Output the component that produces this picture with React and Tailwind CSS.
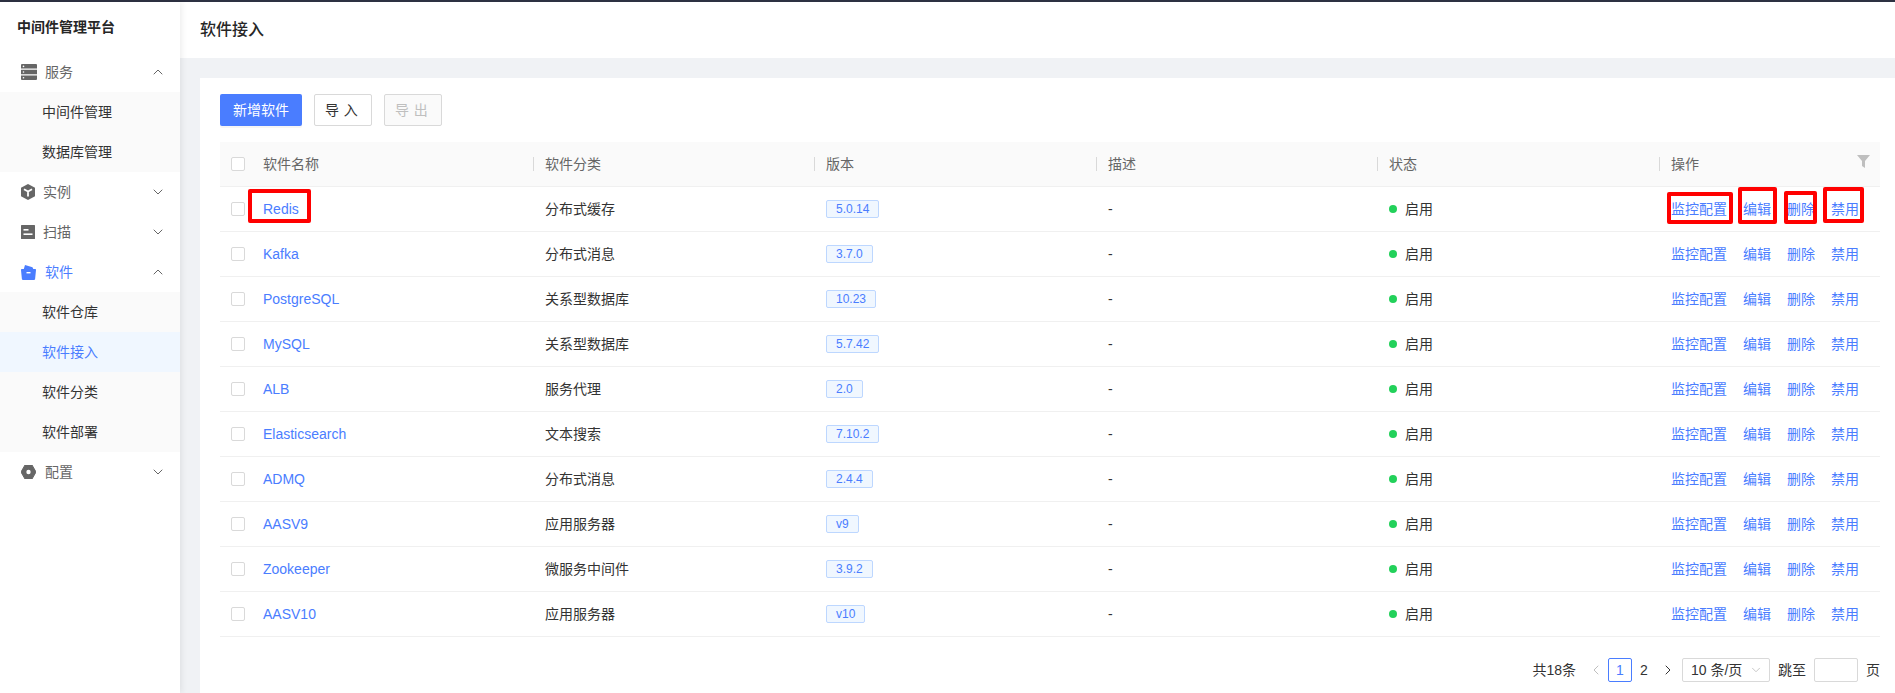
import React from "react";
import { ChevronUp, ChevronDown, ChevronLeft, ChevronRight } from "lucide-react";

const font = "font-['Liberation_Sans','Noto_Sans_CJK_SC',sans-serif]";

const rows = [
  ["Redis", "分布式缓存", "5.0.14"],
  ["Kafka", "分布式消息", "3.7.0"],
  ["PostgreSQL", "关系型数据库", "10.23"],
  ["MySQL", "关系型数据库", "5.7.42"],
  ["ALB", "服务代理", "2.0"],
  ["Elasticsearch", "文本搜索", "7.10.2"],
  ["ADMQ", "分布式消息", "2.4.4"],
  ["AASV9", "应用服务器", "v9"],
  ["Zookeeper", "微服务中间件", "3.9.2"],
  ["AASV10", "应用服务器", "v10"],
];

const columns = ["软件分类", "版本", "描述", "状态", "操作"];

const ServerIcon = () => (
  <svg width="16" height="16" viewBox="0 0 16 16" fill="#666">
    <path d="M1 0h14a1 1 0 0 1 1 1v3.5H0V1a1 1 0 0 1 1-1zM0 5.8h16v4.4H0zM0 11.5h16V15a1 1 0 0 1-1 1H1a1 1 0 0 1-1-1z" />
    <circle cx="2.5" cy="2.4" r="0.8" fill="#fff" />
    <circle cx="2.5" cy="8" r="0.8" fill="#fff" />
    <circle cx="2.5" cy="13.7" r="0.8" fill="#fff" />
  </svg>
);

const CubeIcon = () => (
  <svg width="14" height="16" viewBox="0 0 14 16" fill="#666">
    <path d="M7 0l7 3.8v8.4L7 16l-7-3.8V3.8z" />
    <path d="M7 7.6L3 5.2M7 7.6l4-2.4M7 7.6v5" stroke="#fff" strokeWidth="1.8" fill="none" />
  </svg>
);

const ScanIcon = () => (
  <svg width="14" height="14" viewBox="0 0 14 14">
    <rect width="14" height="14" rx="0.5" fill="#666" />
    <rect x="2.5" y="4" width="5" height="1.6" fill="#fff" />
    <rect x="2.5" y="8.4" width="9" height="1.6" fill="#fff" />
  </svg>
);

const BagIcon = () => (
  <svg width="15" height="15" viewBox="0 0 15 15" fill="#4a7dff">
    <path d="M4 0l7.5 2.2.8 1.8H14.2a.8.8 0 0 1 .8.9l-.9 9a1.2 1.2 0 0 1-1.2 1.1H2.1a1.2 1.2 0 0 1-1.2-1.1L0 4.9A.8.8 0 0 1 .8 4h2z" />
    <rect x="5.5" y="7" width="4" height="1.4" fill="#fff" />
  </svg>
);

const HexIcon = () => (
  <svg width="15" height="14" viewBox="0 0 15 14">
    <path d="M4 0h7l4 7-4 7H4L0 7z" fill="#666" stroke="#666" strokeLinejoin="round" />
    <circle cx="7.5" cy="7" r="2.2" fill="#fff" />
  </svg>
);

const FunnelIcon = () => (
  <svg width="13" height="13" viewBox="0 0 13 13" fill="#bfbfbf">
    <path d="M0 0h13L8 6v7L5 11V6z" />
  </svg>
);

const NavGroup = ({ icon, label, open, active, labelClass = "ml-[8px]" }) => {
  const Chevron = open ? ChevronUp : ChevronDown;
  return (
    <div className="h-[40px] flex items-center pl-[21px] pr-[14px] bg-white">
      <span className="w-[16px] flex justify-start">{icon}</span>
      <span className={`${labelClass} text-[14px] ${active ? "text-[#4a7dff]" : "text-[#666]"}`}>{label}</span>
      <Chevron className="ml-auto text-[#666]" size={16} strokeWidth={1.5} />
    </div>
  );
};

const NavItem = ({ label, active }) => (
  <div className={`h-[40px] flex items-center pl-[42px] text-[14px] ${active ? "bg-[#f0f7ff] text-[#4a7dff]" : "text-[#333]"}`}>
    {label}
  </div>
);

const Sidebar = () => (
  <aside className="w-[180px] shrink-0 bg-white relative z-10 shadow-[2px_0_6px_rgba(0,0,0,0.07)]">
    <div className="h-[50px] flex items-center pl-[17px] text-[14px] font-bold text-[#262626]">中间件管理平台</div>
    <NavGroup icon={<ServerIcon />} label="服务" open labelClass="ml-[8px]" />
    <div className="bg-[#fafafa]">
      <NavItem label="中间件管理" />
      <NavItem label="数据库管理" />
    </div>
    <NavGroup icon={<CubeIcon />} label="实例" labelClass="ml-[6px]" />
    <NavGroup icon={<ScanIcon />} label="扫描" labelClass="ml-[6px]" />
    <NavGroup icon={<BagIcon />} label="软件" open active labelClass="ml-[8px]" />
    <div className="bg-[#fafafa]">
      <NavItem label="软件仓库" />
      <NavItem label="软件接入" active />
      <NavItem label="软件分类" />
      <NavItem label="软件部署" />
    </div>
    <NavGroup icon={<HexIcon />} label="配置" labelClass="ml-[8px]" />
  </aside>
);

const Checkbox = () => <span className="block w-[14px] h-[14px] rounded-[2px] border border-[#d9d9d9] bg-white" />;

const RedBox = ({ className }) => (
  <span className={`absolute border-[4px] border-[#ff0000] rounded-[2px] pointer-events-none ${className}`} />
);

const gridCols = "grid grid-cols-[313px_281px_282px_281px_282px_221px]";

const Table = () => (
  <div className="mt-[16px] text-[14px]">
    <div className={`${gridCols} h-[45px] bg-[#fafafa] border-b border-[#f0f0f0] text-[#666] relative`}>
      <div className="flex items-center pl-[11px]">
        <Checkbox />
        <span className="ml-[18px]">软件名称</span>
      </div>
      {columns.map((c) => (
        <div key={c} className="flex items-center">
          <span className="w-px h-[14px] bg-[#d9d9d9] mr-[11px]" />
          {c}
        </div>
      ))}
      <span className="absolute right-[10px] top-[13px]">
        <FunnelIcon />
      </span>
    </div>
    {rows.map(([name, type, version]) => (
      <div key={name} className={`${gridCols} h-[45px] border-b border-[#f0f0f0] text-[#333]`}>
        <div className="flex items-center pl-[11px]">
          <Checkbox />
          <a className="ml-[18px] text-[#4a7dff]">{name}</a>
        </div>
        <div className="flex items-center pl-[12px]">{type}</div>
        <div className="flex items-center pl-[12px]">
          <span className="h-[18px] px-[9px] flex items-center text-[12px] rounded-[2px] border border-[#bdd7ff] bg-[#f0f7ff] text-[#4a7dff]">
            {version}
          </span>
        </div>
        <div className="flex items-center pl-[12px]">-</div>
        <div className="flex items-center pl-[12px]">
          <span className="w-[8px] h-[8px] rounded-full bg-[#22d15a]" />
          <span className="ml-[8px]">启用</span>
        </div>
        <div className="flex items-center pl-[12px] gap-[16px] text-[#4a7dff]">
          <a>监控配置</a>
          <a>编辑</a>
          <a>删除</a>
          <a>禁用</a>
        </div>
      </div>
    ))}
  </div>
);

const Pagination = () => (
  <div className="mt-[21px] h-[24px] flex items-center justify-end text-[14px] text-[#333] whitespace-nowrap">
    <span>共18条</span>
    <ChevronLeft className="ml-[12px] text-[#bfbfbf]" size={16} strokeWidth={1.5} />
    <span className="ml-[4px] w-[24px] h-[24px] flex items-center justify-center rounded-[2px] border border-[#4a7dff] text-[#4a7dff]">1</span>
    <span className="w-[24px] text-center">2</span>
    <ChevronRight className="ml-[4px] text-[#333]" size={16} strokeWidth={1.5} />
    <span className="ml-[6px] w-[88px] h-[24px] flex items-center pl-[8px] pr-[6px] rounded-[2px] border border-[#d9d9d9]">
      10 条/页
      <ChevronDown className="ml-auto text-[#bfbfbf]" size={14} strokeWidth={1.5} />
    </span>
    <span className="ml-[8px]">跳至</span>
    <span className="ml-[8px] w-[44px] h-[24px] rounded-[2px] border border-[#d9d9d9]" />
    <span className="ml-[8px]">页</span>
  </div>
);

export default function App() {
  return (
    <div className={`${font} h-[693px] flex flex-col overflow-hidden`}>
      <div className="h-[2px] bg-[#2d3142] shrink-0" />
      <div className="flex flex-1 min-h-0">
        <Sidebar />
        <main className="flex-1 min-w-0 bg-[#f0f2f5]">
          <header className="h-[56px] bg-white flex items-center pl-[20px] text-[16px] font-medium text-[#262626]">软件接入</header>
          <section className="relative mt-[20px] ml-[20px] h-[615px] bg-white pl-[20px] pr-[15px] pt-[16px]">
            <div className="flex gap-[12px] text-[14px]">
              <button className="w-[82px] h-[32px] rounded-[2px] bg-[#4a7dff] text-white shadow-[0_2px_0_rgba(0,0,0,0.04)]">新增软件</button>
              <button className="w-[58px] h-[32px] rounded-[2px] border border-[#d9d9d9] bg-white text-[#333] tracking-[0.34em] indent-[0.1em]">导入</button>
              <button className="w-[58px] h-[32px] rounded-[2px] border border-[#d9d9d9] bg-[#fafafa] text-[#bfbfbf] tracking-[0.34em] indent-[0.1em]">导出</button>
            </div>
            <Table />
            <Pagination />
            <RedBox className="left-[48px] top-[111px] w-[63px] h-[34px]" />
            <RedBox className="left-[1467px] top-[114px] w-[66px] h-[32px]" />
            <RedBox className="left-[1538px] top-[109px] w-[39px] h-[37px]" />
            <RedBox className="left-[1584px] top-[113px] w-[33px] h-[33px]" />
            <RedBox className="left-[1623px] top-[109px] w-[41px] h-[36px]" />
          </section>
        </main>
      </div>
    </div>
  );
}
